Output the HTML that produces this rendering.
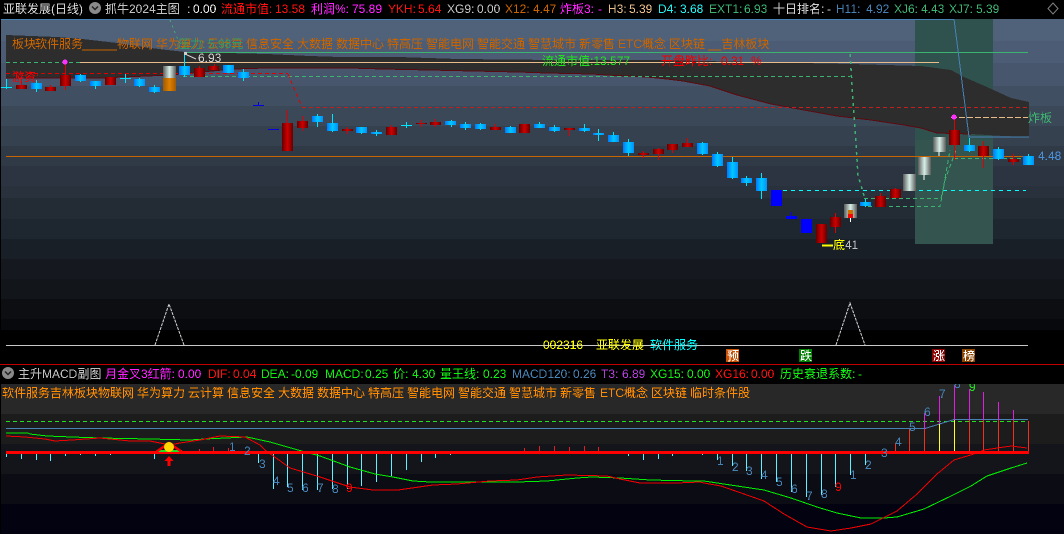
<!DOCTYPE html>
<html><head><meta charset="utf-8"><style>
html,body{margin:0;padding:0;background:#000;width:1064px;height:534px;overflow:hidden}
svg{display:block}
text{font-family:"Liberation Sans","WenQuanYi Zen Hei","Noto Sans CJK SC",sans-serif;font-size:12px;white-space:pre;filter:url(#aa)}
</style></head><body>
<svg width="1064" height="534" viewBox="0 0 1064 534" xmlns="http://www.w3.org/2000/svg">
<defs>
<filter id="aa" x="-10%" y="-20%" width="120%" height="140%" color-interpolation-filters="sRGB"><feComponentTransfer><feFuncA type="discrete" tableValues="0 1"/></feComponentTransfer></filter>
<linearGradient id="b"><stop offset="0" stop-color="#0078ff"/><stop offset=".5" stop-color="#00c8ff"/><stop offset="1" stop-color="#0090ff"/></linearGradient>
<linearGradient id="r"><stop offset="0" stop-color="#640000"/><stop offset=".5" stop-color="#d00000"/><stop offset="1" stop-color="#640000"/></linearGradient>
<linearGradient id="g"><stop offset="0" stop-color="#5a5a5a"/><stop offset=".5" stop-color="#d8f0e8"/><stop offset="1" stop-color="#5a5a5a"/></linearGradient>
<linearGradient id="o"><stop offset="0" stop-color="#a05a00"/><stop offset=".5" stop-color="#e08000"/><stop offset="1" stop-color="#a05a00"/></linearGradient>
</defs>
<rect width="1064" height="534" fill="#000"/>
<g shape-rendering="crispEdges">
<rect x="1" y="19" width="1063" height="22" fill="#50617a"/>
<rect x="1" y="41" width="1063" height="22" fill="#4c5c74"/>
<rect x="1" y="63" width="1063" height="23" fill="#47566c"/>
<rect x="1" y="86" width="1063" height="20" fill="#414f62"/>
<rect x="1" y="106" width="1063" height="20" fill="#3b4858"/>
<rect x="1" y="126" width="1063" height="20" fill="#36414f"/>
<rect x="1" y="146" width="1063" height="20" fill="#303a47"/>
<rect x="1" y="166" width="1063" height="20" fill="#2b3440"/>
<rect x="1" y="186" width="1063" height="12" fill="#28313c"/>
<rect x="1" y="198" width="1063" height="21" fill="#232b35"/>
<rect x="1" y="219" width="1063" height="20" fill="#1e2630"/>
<rect x="1" y="239" width="1063" height="20" fill="#191f27"/>
<rect x="1" y="259" width="1063" height="20" fill="#15191f"/>
<rect x="1" y="279" width="1063" height="20" fill="#121519"/>
<rect x="1" y="299" width="1063" height="20" fill="#0c0e12"/>
<rect x="1" y="319" width="1063" height="11" fill="#07090d"/>
<rect x="915" y="19" width="78" height="225" fill="#30524f"/>
<rect x="915" y="140" width="78" height="104" fill="#33544f"/>
</g>
<polygon fill="#2d2d2d" points="6,35 57,37 82,39 100,41 117,43 143,47 167,50 185,52 267,54 310,56 340,57 399,57 458,59 557,60 650,60 704,61 850,64 921,66 951,70 964,77 987,87 1011,98 1029,102 1029,137 1004,136 971,134 937,133 921,128 904,125 871,120 837,116 804,110 771,104 737,95 710,86 683,81 667,79 647,77 607,75 592,74 547,73 518,72 473,71 429,70 383,69 350,68 325,68 267,68 233,69 170,75 100,78 6,78" shape-rendering="crispEdges"/>
<polyline fill="none" stroke="#5a0a10" stroke-width="1" shape-rendering="crispEdges" points="6,78 100,78 170,75 233,69 267,68 325,68 350,68 383,69 429,70 473,71 518,72 547,73 592,74 607,75 647,77 667,79 683,81 710,86 737,95 771,104 804,110 837,116 871,120 904,125 921,128 937,133 971,134"/>

<g shape-rendering="crispEdges" fill="none">
<path d="M184 52.5H1028" stroke="#3cb371"/>
<path d="M80 62.5H939" stroke="#e8bd8a"/>
<path d="M6 62.5H80" stroke="#3cb371" stroke-dasharray="4 3"/>
<path d="M183 76.5H850" stroke="#3cb371" stroke-dasharray="4 3"/>
<path d="M6 73.5H288" stroke="#e00000" stroke-dasharray="4 3"/>
<path d="M288 74L302 107" stroke="#e00000" stroke-dasharray="4 3"/>
<path d="M302 107.5H1028" stroke="#c02020" stroke-dasharray="4 3"/>
<path d="M6 156.5H1029" stroke="#c86400"/>
<path d="M775 190.5H1026" stroke="#00ffff" stroke-dasharray="4 4"/>
<path d="M954 19L969 137H1029" stroke="#4682b4"/>
<path d="M170 20L178 40L185 52" stroke="#3cb371" stroke-dasharray="2 4"/>
<path d="M850 54L858 175L865 199" stroke="#3cb371" stroke-width="1.5" stroke-dasharray="3 4"/>
<path d="M864 198.5H941L943 190L950 150" stroke="#3cb371" stroke-dasharray="4 3"/>
<path d="M868 206.5H940L945 180L956 150" stroke="#3cb371" stroke-dasharray="4 3"/>
<path d="M954 158.5H1024" stroke="#3cb371" stroke-dasharray="4 3"/>
<path d="M951 117.5H1028" stroke="#e8bd8a" stroke-dasharray="6 2"/>
</g>

<g stroke="#00e5ff" shape-rendering="crispEdges" fill="none">
<path d="M6.5 79V89M1 87.5H12M36.5 80V92M80.5 74V82M95.5 81V89M125.5 74V83M120 78.5H131M139.5 78V87M154.5 85V93M184.5 54V77M243.5 69V81M317.5 114V127M332.5 114V132M361.5 127V134M376.5 130V136M406.5 122V128M401 125.5H412M451.5 120V127M465.5 122V130M480.5 123V130M510.5 126V133M539.5 122V128M554.5 125V132M584.5 124V132M598.5 129V141M613.5 132V142M628.5 139V156M702.5 142V155M717.5 152V167M732.5 157V179M746.5 176V186M761.5 173V199M865.5 199V207M969.5 138V152M998.5 147V160M1028.5 154V165"/>
</g>
<g stroke="#e00000" shape-rendering="crispEdges" fill="none">
<path d="M21.5 81V89M50.5 85V91M65.5 62V90M199.5 66V77M214.5 64V70M287.5 110V151M302.5 116V131M347.5 127V134M391.5 125V135M421.5 120V127M435.5 119V127M495.5 124V130M569.5 128V136M643.5 151V158M658.5 148V160M672.5 144V153M687.5 138V147M835.5 213V233M880.5 193V207M895.5 188V198M954.5 117V160M983.5 141V168M1013.5 154V165"/>
</g>
<path d="M253 105.5H264M258.5 102V105M268 129.5H279" stroke="#0000e0" shape-rendering="crispEdges"/>
<path d="M791 212V216" stroke="#0000ff" shape-rendering="crispEdges"/>
<path d="M924 175V180M939 152V156" stroke="#fff" shape-rendering="crispEdges"/>
<path d="M850.5 218V222" stroke="#fff" shape-rendering="crispEdges"/>

<g shape-rendering="crispEdges">
<g fill="url(#r)">
<rect x="16" y="85" width="11" height="4"/><rect x="45" y="87" width="11" height="4"/><rect x="60" y="75" width="11" height="11"/><rect x="105" y="77" width="11" height="8"/><rect x="194" y="68" width="11" height="9"/><rect x="208" y="66" width="11" height="4"/><rect x="282" y="123" width="11" height="28"/><rect x="297" y="121" width="11" height="7"/><rect x="342" y="129" width="11" height="2"/><rect x="386" y="127" width="11" height="8"/><rect x="416" y="123" width="11" height="1"/><rect x="430" y="122" width="11" height="3"/><rect x="490" y="127" width="11" height="3"/><rect x="519" y="124" width="11" height="9"/><rect x="564" y="128" width="11" height="2"/><rect x="638" y="153" width="11" height="2"/><rect x="653" y="149" width="11" height="5"/><rect x="667" y="144" width="11" height="6"/><rect x="682" y="143" width="11" height="4"/><rect x="816" y="224" width="11" height="19"/><rect x="830" y="217" width="11" height="10"/><rect x="875" y="196" width="11" height="11"/><rect x="890" y="189" width="11" height="9"/><rect x="949" y="130" width="11" height="15"/><rect x="978" y="146" width="11" height="10"/><rect x="1008" y="159" width="11" height="3"/>
</g>
<g fill="url(#b)">
<rect x="31" y="83" width="11" height="6"/><rect x="75" y="75" width="11" height="6"/><rect x="90" y="81" width="11" height="5"/><rect x="134" y="79" width="11" height="7"/><rect x="149" y="87" width="11" height="5"/><rect x="179" y="66" width="11" height="9"/><rect x="223" y="65" width="11" height="8"/><rect x="238" y="72" width="11" height="6"/><rect x="312" y="116" width="11" height="6"/><rect x="327" y="123" width="11" height="8"/><rect x="356" y="127" width="11" height="6"/><rect x="371" y="132" width="11" height="2"/><rect x="445" y="121" width="11" height="4"/><rect x="460" y="124" width="11" height="4"/><rect x="475" y="124" width="11" height="5"/><rect x="505" y="127" width="11" height="6"/><rect x="534" y="124" width="11" height="4"/><rect x="549" y="127" width="11" height="4"/><rect x="579" y="128" width="11" height="3"/><rect x="593" y="133" width="11" height="2"/><rect x="608" y="135" width="11" height="7"/><rect x="623" y="142" width="11" height="11"/><rect x="697" y="143" width="11" height="11"/><rect x="712" y="154" width="11" height="12"/><rect x="727" y="162" width="11" height="16"/><rect x="741" y="178" width="11" height="5"/><rect x="756" y="178" width="11" height="13"/><rect x="860" y="202" width="11" height="4"/><rect x="964" y="145" width="11" height="6"/><rect x="993" y="149" width="11" height="10"/><rect x="1023" y="156" width="11" height="9"/>
</g>
<g fill="#0000ff">
<rect x="771" y="190" width="11" height="16"/><rect x="786" y="216" width="11" height="3"/><rect x="801" y="219" width="11" height="14"/>
</g>
<g fill="url(#g)">
<rect x="163" y="66" width="13" height="25"/><rect x="844" y="204" width="13" height="14"/><rect x="903" y="174" width="13" height="17"/><rect x="918" y="157" width="13" height="18"/><rect x="933" y="137" width="13" height="15"/>
</g>
<rect x="163" y="78" width="13" height="13" fill="url(#o)"/>
<rect x="848" y="210" width="5" height="5" fill="#d07000"/>
<rect x="848" y="214" width="5" height="4" fill="#f00"/>
</g>
<path d="M65 59l3 3-3 3-3-3z" fill="#ff30ff"/><rect x="63" y="60" width="4" height="4" fill="#ff30ff"/>
<path d="M954 114l3 3-3 3-3-3z" fill="#ff30ff"/><rect x="952" y="115" width="4" height="4" fill="#ff30ff"/>

<path d="M155 345L169 304L184 345M836 345L850 303L865 345" fill="none" stroke="#d8d8d8" stroke-dasharray="3 1"/>
<path d="M6 345.5H1028" stroke="#c8c8c8" shape-rendering="crispEdges"/>

<g fill="#c86400">
<text x="12" y="48">板块</text><text x="35" y="48">软件服务</text><text x="82" y="48" textLength="35">______</text><text x="117" y="48">物联网</text><text x="156" y="48">华为算力</text><text x="207" y="48">云计算</text><text x="246" y="48">信息安全</text><text x="297" y="48">大数据</text><text x="336" y="48">数据中心</text><text x="387" y="48">特高压</text><text x="426" y="48">智能电网</text><text x="477" y="48">智能交通</text><text x="528" y="48">智慧城市</text><text x="579" y="48">新零售</text><text x="618" y="48">ETC概念</text><text x="669" y="48">区块链</text><text x="708" y="48">__吉林板块</text>
</g>
<text x="178" y="48" fill="#2e9b68">压力:</text><text x="208" y="48" fill="#2e9b68">5.98元</text>
<text x="12" y="81" fill="#f00000">游资:</text>
<path d="M185 54L196 59" stroke="#d0d0d0" fill="none"/><rect x="184" y="52" width="3" height="3" fill="#d0d0d0"/>
<text x="198" y="62" fill="#d0d0d0">6.93</text>
<text x="542" y="65" fill="#20e020">流通市值:13.577</text>
<text x="661" y="65" fill="#f00000">开盘昨比:</text><text x="721" y="65" fill="#f00000">0.31</text><text x="751" y="65" fill="#f00000">%</text>
<text x="1028" y="122" fill="#3cb371">炸板</text>
<text x="1038" y="160" fill="#4a90d8">4.48</text>
<path d="M822 245.500H833" stroke="#ffff00" stroke-width="2"/>
<text x="833" y="249" fill="#ffff00">底</text><text x="845" y="249" fill="#c0c0c0">41</text>
<text x="543" y="349" fill="#ffff00">002316</text><text x="596" y="349" fill="#ffff00">亚联发展</text><text x="650" y="349" fill="#00ffff">软件服务</text>
<g shape-rendering="crispEdges">
<rect x="726" y="349" width="13" height="13" fill="#c85000"/><rect x="799" y="349" width="13" height="13" fill="#008000"/><rect x="932" y="349" width="13" height="13" fill="#8b0000"/><rect x="962" y="349" width="13" height="13" fill="#8b4500"/>
</g>
<g fill="#fff"><text x="727" y="360">预</text><text x="800" y="360">跌</text><text x="933" y="360">涨</text><text x="963" y="360">榜</text></g>

<g shape-rendering="crispEdges">
<rect x="1" y="384" width="1063" height="30" fill="#282828"/>
<rect x="1" y="414" width="1063" height="30" fill="#1c1c1c"/>
<rect x="1" y="444" width="1063" height="30" fill="#14151a"/>
<rect x="1" y="474" width="1063" height="30" fill="#0c0d14"/>
<rect x="1" y="504" width="1063" height="30" fill="#020210"/>
</g>
<g shape-rendering="crispEdges" fill="none">
<path d="M6 421.5H1028" stroke="#20e020" stroke-dasharray="4 3"/>
<path d="M6 428.5H925L954 419.5H1028" stroke="#4682b4"/>
<path d="M6.500 453V457M21.5 453V459M36.5 453V460M50.5 453V461M65.5 453V456M80.5 453V455M95.5 453V456M110.5 453V455M125.5 453V454M140.5 453V454M154.5 453V459M258.5 453V463M273.5 453V489M287.5 453V487M302.5 453V490M317.5 453V490M332.5 453V489M347.5 453V489M361.5 453V486M376.5 453V482M391.5 453V476M406.5 453V470M421.5 453V462M435.5 453V458M450.5 453V455M628.5 453V456M643.5 453V460M658.5 453V459M672.5 453V456M702.5 453V455M717.5 453V460M732.5 453V466M746.5 453V471M761.5 453V479M776.5 453V482M791.5 453V492M806.5 453V497M821.5 453V495M835.5 453V487M850.5 453V475M865.5 453V465" stroke="#60f0ff"/>
<path d="M199.5 449V452M213.5 447V452M228.5 448V452M524.5 448V452M539.5 446V452M554.5 446V452M569.5 447V452M584.5 446V452M598.5 447V452" stroke="#e02020"/>
<path d="M895.5 443V452M909.5 429V452M924.5 429V452M969.5 420V452M983.5 420V452M998.5 420V452M1013.5 420V452M1028.5 421V452" stroke="#f03020"/>
<path d="M924.5 413V429M939.5 396V424M954.5 385V420M969.5 389V420M983.5 392V420M998.5 402V420M1013.5 410V420" stroke="#e020e0"/>
<path d="M939.5 424V452M954.5 420V452" stroke="#ffff20"/>
</g>
<polyline fill="none" stroke="#00f000" shape-rendering="crispEdges" points="6,433 28,433 30,434 47,436 72,437 100,438 150,439 190,440 205,439 247,437 270,442 298,450 320,456 350,467 375,474 393,477 413,481 430,482 517,482 547,481 577,478 592,477 620,478 650,480 693,481 704,481 737,486 764,490 791,498 817,507 837,513 861,518 884,518 897,517 924,509 951,496 971,486 987,476 1011,468 1027,463"/>
<polyline fill="none" stroke="#f00000" shape-rendering="crispEdges" points="6,436 25,437 45,439 55,441 72,440 100,438 130,441 150,441 170,445 180,443 200,440 220,436 245,437 260,445 265,450 290,468 320,477 350,487 373,490 398,490 433,485 457,484 490,481 517,480 537,477 567,475 607,476 620,479 640,483 677,483 700,482 704,483 721,486 744,494 764,501 784,514 807,527 831,531 851,528 871,524 897,511 917,494 937,474 954,460 974,454 984,450 1011,446 1027,448"/>
<rect x="6" y="451" width="1023" height="3" fill="#ff0000" shape-rendering="crispEdges"/>
<path d="M157 451H182" stroke="#20e020" stroke-width="2"/>
<path d="M156 452L169 443L182 452" stroke="#f00000" stroke-width="2.5" fill="none"/>
<circle cx="169" cy="447" r="5" fill="#ffd800"/>
<path d="M169 456l-4.500 5h3v5h3v-5h3z" fill="#ff0000"/>
<g fill="#4682b4">
<text x="229" y="451">1</text><text x="244" y="455">2</text><text x="259" y="468">3</text><text x="273" y="485">4</text><text x="287" y="492">5</text><text x="302" y="492">6</text><text x="317" y="492">7</text><text x="332" y="493">8</text>
<text x="717" y="465">1</text><text x="732" y="471">2</text><text x="746" y="475">3</text><text x="761" y="479">4</text><text x="776" y="486">5</text><text x="791" y="493">6</text><text x="806" y="500">7</text><text x="821" y="498">8</text><text x="850" y="479">1</text><text x="865" y="469">2</text><text x="881" y="457">3</text><text x="895" y="446">4</text><text x="909" y="431">5</text><text x="924" y="416">6</text><text x="939" y="398">7</text><text x="954" y="388">8</text>
</g>
<text x="346" y="492" fill="#f00000">9</text><text x="835" y="491" fill="#f00000">9</text><text x="969" y="391" fill="#20e020">9</text>

<rect x="0" y="0" width="1064" height="19" fill="#000"/>
<rect x="0" y="365" width="1064" height="19" fill="#000"/>
<path d="M0 364.500H1064" stroke="#c00000" shape-rendering="crispEdges"/>
<path d="M1 19.500H954" stroke="#4682b4" shape-rendering="crispEdges"/>

<g>
<text x="3" y="13" fill="#d0d0d0">亚联发展(日线)</text>
<circle cx="95" cy="8" r="6" fill="#8a8a8a"/><path d="M92 6.500L95 9.500L98 6.500" fill="none" stroke="#222" stroke-width="1.500"/>
<text x="105" y="13" fill="#c0c0c0">抓牛2024主图</text><text x="187" y="13" fill="#c0c0c0">:</text><text x="193" y="13" fill="#e8e8e8">0.00</text>
<text x="221" y="13" fill="#ff1010">流通市值:</text><text x="275" y="13" fill="#ff1010">13.58</text>
<text x="311" y="13" fill="#ff20ff">利润%:</text><text x="352" y="13" fill="#ff20ff">75.89</text>
<text x="388" y="13" fill="#ff1010">YKH:</text><text x="418" y="13" fill="#ff1010">5.64</text>
<text x="447" y="13" fill="#c0c0c0">XG9:</text><text x="477" y="13" fill="#c0c0c0">0.00</text>
<text x="505" y="13" fill="#c86400">X12:</text><text x="533" y="13" fill="#c86400">4.47</text>
<text x="560" y="13" fill="#ff20ff">炸板3:</text><text x="598" y="13" fill="#ff20ff">-</text>
<text x="608" y="13" fill="#e8bd8a">H3:</text><text x="629" y="13" fill="#e8bd8a">5.39</text>
<text x="658" y="13" fill="#20f0f0">D4:</text><text x="680" y="13" fill="#20f0f0">3.68</text>
<text x="709" y="13" fill="#3cb371">EXT1:</text><text x="744" y="13" fill="#3cb371">6.93</text>
<text x="773" y="13" fill="#d0d0d0">十日排名:</text><text x="827" y="13" fill="#d0d0d0">-</text>
<text x="836" y="13" fill="#4682b4">H11:</text><text x="866" y="13" fill="#4682b4">4.92</text>
<text x="894" y="13" fill="#3cb371">XJ6:</text><text x="921" y="13" fill="#3cb371">4.43</text>
<text x="949" y="13" fill="#3cb371">XJ7:</text><text x="976" y="13" fill="#3cb371">5.39</text>
<path d="M1053 3L1058 8.500L1053 14L1048 8.500Z" fill="none" stroke="#808080"/>

<circle cx="8" cy="373" r="6" fill="#8a8a8a"/><path d="M5 371.500L8 374.500L11 371.500" fill="none" stroke="#222" stroke-width="1.500"/>
<text x="18" y="378" fill="#c0c0c0">主升MACD副图</text>
<text x="105" y="378" fill="#ff20ff">月金叉3红箭:</text><text x="178" y="378" fill="#ff20ff">0.00</text>
<text x="208" y="378" fill="#ff1010">DIF:</text><text x="233" y="378" fill="#ff1010">0.04</text>
<text x="261" y="378" fill="#10f010">DEA:</text><text x="291" y="378" fill="#10f010">-0.09</text>
<text x="325" y="378" fill="#10f010">MACD:</text><text x="365" y="378" fill="#10f010">0.25</text>
<text x="393" y="378" fill="#10f010">价:</text><text x="412" y="378" fill="#10f010">4.30</text>
<text x="440" y="378" fill="#10f010">量王线:</text><text x="483" y="378" fill="#10f010">0.23</text>
<text x="512" y="378" fill="#4682b4">MACD120:</text><text x="573" y="378" fill="#4682b4">0.26</text>
<text x="601" y="378" fill="#b040d8">T3:</text><text x="622" y="378" fill="#b040d8">6.89</text>
<text x="650" y="378" fill="#10f010">XG15:</text><text x="687" y="378" fill="#10f010">0.00</text>
<text x="715" y="378" fill="#ff1010">XG16:</text><text x="751" y="378" fill="#ff1010">0.00</text>
<text x="780" y="378" fill="#10f010">历史衰退系数:</text><text x="858" y="378" fill="#10f010">-</text>
<g fill="#ff8c00">
<text x="2" y="397">软件服务吉林板块物联网</text><text x="137" y="397">华为算力</text><text x="188" y="397">云计算</text><text x="227" y="397">信息安全</text><text x="278" y="397">大数据</text><text x="317" y="397">数据中心</text><text x="368" y="397">特高压</text><text x="407" y="397">智能电网</text><text x="458" y="397">智能交通</text><text x="509" y="397">智慧城市</text><text x="560" y="397">新零售</text><text x="600" y="397">ETC概念</text><text x="651" y="397">区块链</text><text x="690" y="397">临时条件股</text>
</g>
</g>
</svg>
</body></html>
